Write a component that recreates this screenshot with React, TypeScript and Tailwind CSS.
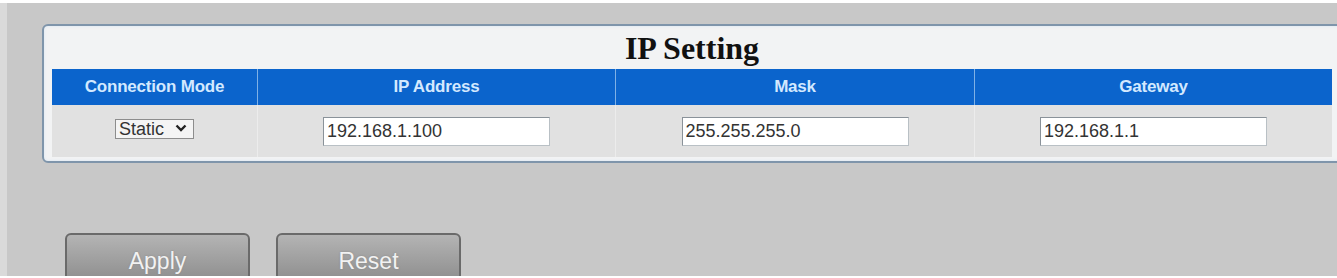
import { useState } from 'react';

const columns = [
  { key: 'mode', label: 'Connection Mode', width: 'w-[205px]' },
  { key: 'ip', label: 'IP Address', width: 'w-[358px]' },
  { key: 'mask', label: 'Mask', width: 'w-[359px]' },
  { key: 'gateway', label: 'Gateway', width: 'w-[358px]' },
];

function TextField({ value, onChange }: { value: string; onChange: (v: string) => void }) {
  return (
    <input
      type="text"
      value={value}
      onChange={(e) => onChange(e.target.value)}
      className="w-[227px] h-[29px] pl-[3px] bg-white border border-[#8a9299] border-r-[#b9c0c5] border-b-[#b9c0c5] text-[18px] text-[#333] outline-none font-['Liberation_Sans',Arial,sans-serif]"
    />
  );
}

export default function App() {
  const [mode, setMode] = useState('Static');
  const [ip, setIp] = useState('192.168.1.100');
  const [mask, setMask] = useState('255.255.255.0');
  const [gateway, setGateway] = useState('192.168.1.1');

  return (
    <div className="w-[1337px] h-[278px] bg-white overflow-hidden font-['Liberation_Sans',Arial,sans-serif]">
      <div className="flex h-[276px] pt-[3px]">
        {/* left strip */}
        <div className="w-[7px] shrink-0 bg-[#dadada]" />

        <div className="flex-1 bg-[#c8c8c8] overflow-hidden pt-[21px] pl-[35px]">
          {/* IP Setting panel */}
          <div className="w-[1300px] rounded-[6px] border-2 border-[#7f95ab] bg-[#f2f3f4] px-[8px] pb-[4px] shadow-[inset_0_0_3px_#d8e6f3]">
            <div className="h-[43px] flex items-center justify-center">
              <h2 className="text-[32px] font-bold leading-none text-[#111] font-['Liberation_Serif','Times_New_Roman',serif]">
                IP Setting
              </h2>
            </div>

            {/* header row */}
            <div className="flex h-[36px] bg-[#0b64cc]">
              {columns.map((c, i) => (
                <div
                  key={c.key}
                  className={`${c.width} flex items-center justify-center text-[17px] font-bold tracking-[-0.2px] text-[#d3e9ff] ${
                    i > 0 ? 'border-l border-[#7fb1e6]' : ''
                  }`}
                >
                  {c.label}
                </div>
              ))}
            </div>

            {/* data row */}
            <div className="flex h-[52px] bg-[#e1e1e1]">
              <div className="w-[205px] flex items-center justify-center pb-[6px]">
                <div className="relative w-[79px] h-[20px]">
                  <select
                    value={mode}
                    onChange={(e) => setMode(e.target.value)}
                    className="appearance-none w-full h-full pl-[3px] pr-[20px] bg-[#f4f4f4] border border-[#8d8d8d] text-[18px] leading-[18px] text-[#333] outline-none font-['Liberation_Sans',Arial,sans-serif]"
                  >
                    <option>Static</option>
                    <option>DHCP</option>
                  </select>
                  <svg
                    className="absolute right-[7px] top-[6px] pointer-events-none"
                    width="12"
                    height="8"
                    viewBox="0 0 12 8"
                  >
                    <path d="M1.5 1.5 L6 6 L10.5 1.5" fill="none" stroke="#222" strokeWidth="2.4" />
                  </svg>
                </div>
              </div>
              <div className="w-[358px] flex items-center justify-center border-l border-[#ececec]">
                <TextField value={ip} onChange={setIp} />
              </div>
              <div className="w-[359px] flex items-center justify-center border-l border-[#ececec]">
                <TextField value={mask} onChange={setMask} />
              </div>
              <div className="w-[358px] flex items-center justify-center border-l border-[#ececec]">
                <TextField value={gateway} onChange={setGateway} />
              </div>
            </div>
          </div>

          {/* buttons */}
          <div className="flex gap-[26px] mt-[70px] ml-[23px]">
            {['Apply', 'Reset'].map((label) => (
              <button
                key={label}
                type="button"
                className="w-[185px] h-[52px] rounded-[6px] border-2 border-[#6a6a6a] bg-gradient-to-b from-[#b4b4b4] via-[#a0a0a0] to-[#8c8c8c] text-[23px] text-[#f2f2f2] flex justify-center pt-[9px] [text-shadow:0_0_2px_#888]"
              >
                {label}
              </button>
            ))}
          </div>
        </div>
      </div>
    </div>
  );
}
